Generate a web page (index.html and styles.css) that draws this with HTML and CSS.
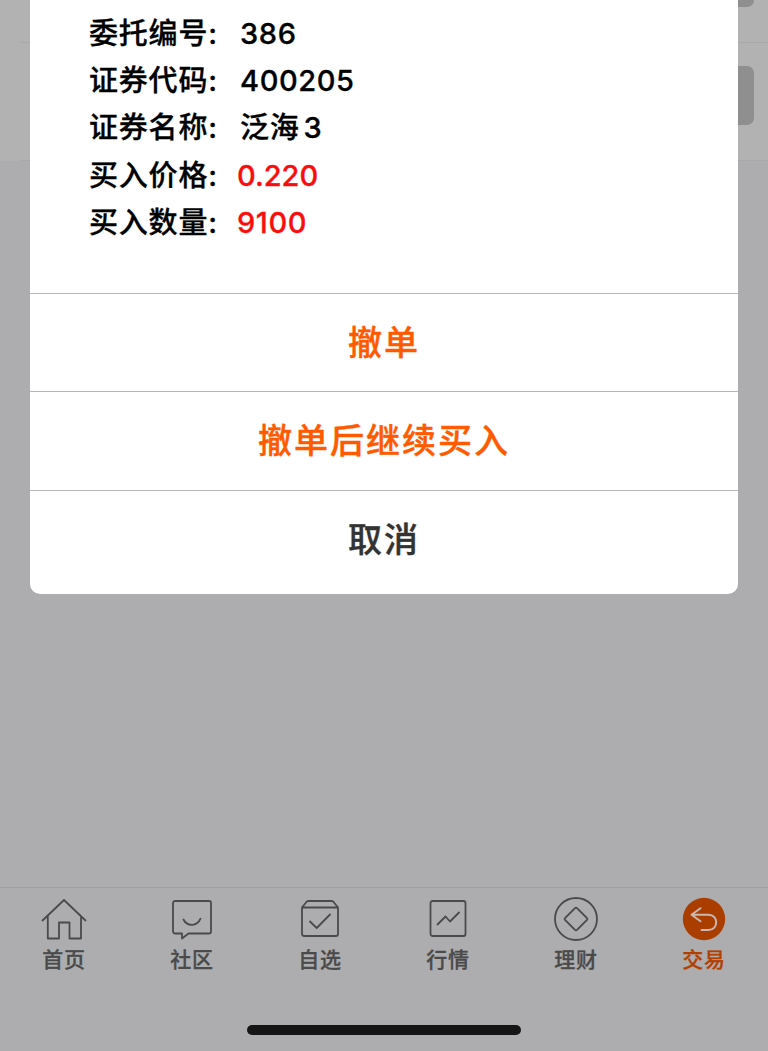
FILE: index.html
```html
<!DOCTYPE html>
<html lang="zh-CN">
<head>
    <meta charset="UTF-8">
    <meta name="viewport" content="width=device-width, initial-scale=1.0">
    <title>撤单</title>
    <link rel="stylesheet" href="styles.css">
</head>
<body>
    <!-- 委托列表 -->
    <div class="order-list">
        <div class="order-item first"><span class="order-btn"></span></div>
        <div class="order-item"><span class="order-btn"></span></div>
    </div>

    <!-- 撤单弹窗 -->
    <div class="dialog">
        <div class="dialog-info">
            <div class="row"><span class="label">委托编号:</span><span class="value">386</span></div>
            <div class="row"><span class="label">证券代码:</span><span class="value">400205</span></div>
            <div class="row"><span class="label">证券名称:</span><span class="value name">泛海<span class="num">3</span></span></div>
            <div class="row"><span class="label">买入价格:</span><span class="value red price">0.220</span></div>
            <div class="row"><span class="label">买入数量:</span><span class="value red">9100</span></div>
        </div>
        <button class="dialog-btn">撤单</button>
        <button class="dialog-btn">撤单后继续买入</button>
        <button class="dialog-btn cancel">取消</button>
    </div>

    <!-- 底部导航 -->
    <footer class="tabbar">
        <nav class="tabs">
            <a class="tab">
                <svg width="48" height="48" viewBox="0 0 48 48">
                    <path d="M2.5 24.500L24 4l21.500 20.500M7.800 20.500v22h11.200v-16h10.500v16h11.500v-22"/>
                </svg>
                <span>首页</span>
            </a>
            <a class="tab">
                <svg width="48" height="48" viewBox="0 0 48 48">
                    <path d="M7 5h34a2 2 0 0 1 2 2v28.500a2 2 0 0 1-2 2H20.500l-6.500 5v-5H7a2 2 0 0 1-2-2V7a2 2 0 0 1 2-2z"/>
                    <path d="M15.500 23.500c3.500 7.200 13.500 7.200 17-.8"/>
                </svg>
                <span>社区</span>
            </a>
            <a class="tab">
                <svg width="48" height="48" viewBox="0 0 48 48">
                    <path d="M6 11.500l4-5q1-1.500 2.500-1.500h23q1.500 0 2.500 1.500l4 5v26.500a2 2 0 0 1-2 2H8a2 2 0 0 1-2-2zM6 11.500h36M14 25.500l6.700 6.500L34 18.500"/>
                </svg>
                <span>自选</span>
            </a>
            <a class="tab">
                <svg width="48" height="48" viewBox="0 0 48 48">
                    <rect x="6.500" y="5" width="35" height="35" rx="2"/>
                    <path d="M13.500 28.500l8-8 4.500 5L35 16.500"/>
                </svg>
                <span>行情</span>
            </a>
            <a class="tab">
                <svg width="48" height="48" viewBox="0 0 48 48">
                    <circle cx="24" cy="23" r="21"/>
                    <path d="M23 12.200q1-1 2 0l10 10q.8.800 0 1.600l-10 10q-1 1-2 0l-10-10q-.8-.8 0-1.600z"/>
                </svg>
                <span>理财</span>
            </a>
            <a class="tab active">
                <svg width="48" height="48" viewBox="0 0 48 48">
                    <circle class="disc" cx="24" cy="23" r="21.200"/>
                    <path d="M20.500 12.200l-9 6.500 9 6.500M12 18.700h16.500c10.300 0 10.300 15.300 0 15.300h-7"/>
                </svg>
                <span>交易</span>
            </a>
        </nav>
        <div class="home-bar"></div>
    </footer>
</body>
</html>
```
FILE: styles.css
```css
* {
    box-sizing: border-box;
}

body {
    margin: 0;
    height: 1051px;
    display: flex;
    flex-direction: column;
    justify-content: space-between;
    position: relative;
    overflow: hidden;
    background: #adadaf;
    font-family: Inter, "Noto Sans CJK SC", sans-serif;
}

/* 委托列表 */
.order-list {
    height: 161px;
    background: #b2b2b2;
}

.order-item {
    height: 118px;
    margin-left: 20px;
    padding: 23px 14px 0 0;
    border-bottom: 1px solid #a8a8aa;
    display: flex;
    justify-content: flex-end;
    align-items: flex-start;
}

.order-item.first {
    height: 43px;
    padding-top: 0;
}

.order-btn {
    width: 120px;
    height: 59px;
    border-radius: 7px;
    background: #8f8f8f;
}

.first .order-btn {
    height: 7px;
    border-radius: 0 0 7px 7px;
}

/* 弹窗 */
.dialog {
    position: absolute;
    top: 0;
    left: 29.500px;
    width: 708.900px;
    height: 594px;
    background: #fff;
    border-radius: 0 0 10px 10px;
    display: flex;
    flex-direction: column;
}

.dialog-info {
    height: 293px;
    padding: 10px 0 0 59.500px;
}

.row {
    display: flex;
    height: 47.200px;
    line-height: 47px;
    font-size: 29px;
    font-weight: 500;
    color: #000;
    -webkit-text-stroke: 0.300px currentColor;
}

.label {
    width: 151px;
    letter-spacing: 0.800px;
}

.value {
    letter-spacing: 0.600px;
}

.value.name {
    letter-spacing: 0.800px;
}

.num {
    margin-left: 4px;
}

.value.red {
    color: #f90d0d;
    margin-left: -3px;
}

.value.price {
    letter-spacing: 0;
}

.dialog-btn {
    height: 98.300px;
    padding: 0 0 4px;
    border: none;
    border-top: 1px solid #b5b5b5;
    background: none;
    font-family: inherit;
    font-size: 34px;
    font-weight: 500;
    letter-spacing: 2px;
    color: #ff5a00;
    -webkit-text-stroke: 0.400px currentColor;
}

.dialog-btn.cancel {
    color: #333;
}

/* 底部导航 */
.tabbar {
    height: 164px;
    border-top: 1px solid #a0a0a4;
    display: flex;
    flex-direction: column;
    align-items: center;
}

.tabs {
    width: 100%;
    height: 137px;
    padding-top: 8px;
    display: flex;
}

.tab {
    flex: 1;
    display: flex;
    flex-direction: column;
    align-items: center;
    font-size: 21px;
    font-weight: 500;
    line-height: 32px;
    letter-spacing: 0.800px;
    color: #4a4a4b;
}

.tab span {
    -webkit-text-stroke: 0.300px currentColor;
}

.tab svg {
    fill: none;
    stroke: currentColor;
    stroke-width: 1.800;
    stroke-linecap: round;
    stroke-linejoin: round;
}

.tab.active {
    color: #b34000;
}

.tab.active svg {
    stroke: #c9b8b0;
    stroke-width: 2;
}

.tab .disc {
    fill: #aa3d00;
    stroke: none;
}

.home-bar {
    width: 274px;
    height: 10px;
    border-radius: 5px;
    background: #151515;
}
```
